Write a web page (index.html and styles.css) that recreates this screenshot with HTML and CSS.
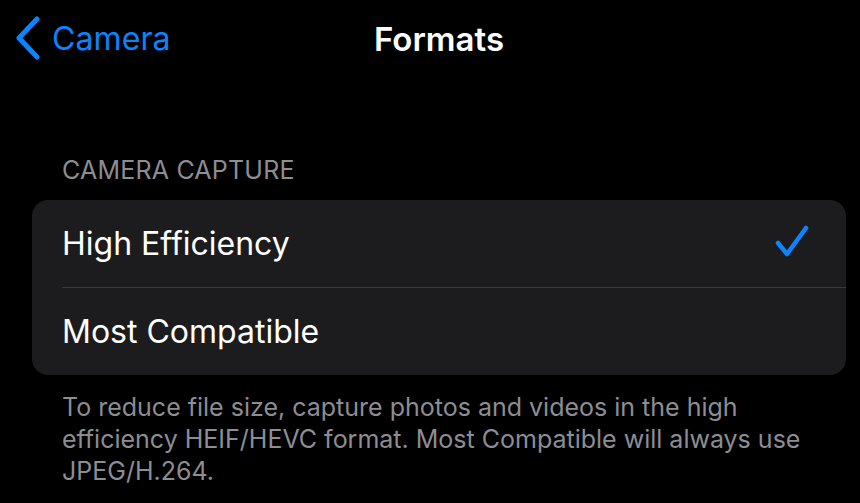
FILE: index.html
```html
<!DOCTYPE html>
<html>
<head>
<meta charset="utf-8">
<link rel="stylesheet" href="styles.css">
</head>
<body>
<div class="screen">
  <header class="nav">
    <div class="back">
      <svg class="chev" width="26" height="44" viewBox="0 0 26 44"><path d="M22 3 L4 22 L22 41" fill="none" stroke="#0a84ff" stroke-width="5" stroke-linecap="round" stroke-linejoin="round"/></svg>
      <span class="back-label">Camera</span>
    </div>
    <div class="title">Formats</div>
  </header>
  <section class="group">
    <div class="group-header">CAMERA CAPTURE</div>
    <div class="card">
      <div class="row">
        <span class="row-label">High Efficiency</span>
        <svg class="check" width="34" height="34" viewBox="0 0 34 34"><path d="M3 18 L12 29 L31 3" fill="none" stroke="#0a84ff" stroke-width="4.5" stroke-linecap="round" stroke-linejoin="round"/></svg>
      </div>
      <div class="sep"></div>
      <div class="row">
        <span class="row-label">Most Compatible</span>
      </div>
    </div>
    <p class="footer">To reduce file size, capture photos and videos in the high efficiency HEIF/HEVC format. Most Compatible will always use JPEG/H.264.</p>
  </section>
</div>
</body>
</html>
```
FILE: styles.css
```css
html, body { margin: 0; padding: 0; background: #000; }
body { font-family: Inter, "Liberation Sans", sans-serif; color: #fff; width: 860px; height: 503px; overflow: hidden; }
.screen { position: relative; width: 860px; height: 503px; }
.nav { position: relative; height: 80px; display: flex; align-items: center; justify-content: center; }
.back { position: absolute; left: 15px; top: 16px; display: flex; align-items: center; gap: 11px; color: #0a84ff; }
.chev { display: block; }
.back-label { font-size: 32px; letter-spacing: 0.1px; }
.title { font-size: 33px; font-weight: 600; margin-top: -2px; margin-left: 18px; }
.group { padding: 0 14px 0 32px; margin-top: 75px; }
.group-header { padding-left: 30px; font-size: 25px; letter-spacing: 0.2px; color: #8d8d93; height: 45px; line-height: 30px; }
.card { background: #1c1c1e; border-radius: 16px; width: 814px; overflow: hidden; }
.row { height: 87px; display: flex; align-items: center; justify-content: space-between; padding: 0 37px 0 30px; }
.row-label { font-size: 32px; }
.check { display: block; margin-top: -4px; }
.sep { height: 1px; background: #3a3a3c; margin-left: 30px; }
.footer { margin: 16px 0 0; padding: 0 30px; font-size: 25px; line-height: 32px; color: #8d8d93; }
```
